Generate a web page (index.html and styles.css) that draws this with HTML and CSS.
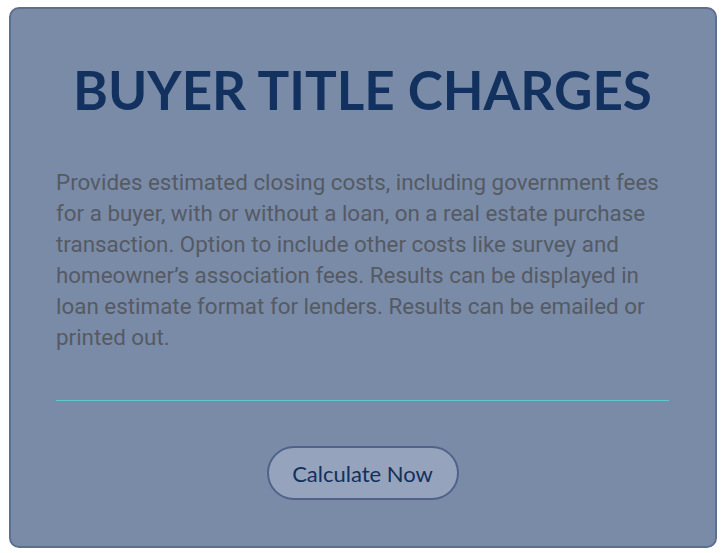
FILE: index.html
```html
<!DOCTYPE html>
<html>
<head>
<meta charset="utf-8">
<link rel="stylesheet" href="styles.css">
</head>
<body>
<div class="card">
  <h1 class="title">BUYER TITLE CHARGES</h1>
  <p class="desc">Provides estimated closing costs, including government fees for a buyer, with or without a loan, on a real estate purchase transaction. Option to include other costs like survey and homeowner’s association fees. Results can be displayed in loan estimate format for lenders. Results can be emailed or printed out.</p>
  <hr class="divider">
  <div class="actions">
    <a class="btn">Calculate Now</a>
  </div>
</div>
</body>
</html>
```
FILE: styles.css
```css
html, body { margin: 0; padding: 0; background: #ffffff; }
body { padding: 7px 10px 0 9px; }
.card {
  box-sizing: border-box;
  width: 708px;
  height: 541px;
  background: #7a8ba8;
  border: 2px solid #5d6f8f;
  border-radius: 10px;
  padding: 0 46px 0 45px;
  display: flex;
  flex-direction: column;
}
.title {
  margin: 49px 0 0;
  text-align: center;
  white-space: nowrap;
  font-family: "Lato", sans-serif;
  font-weight: 700;
  font-size: 53px;
  line-height: 64px;
  color: #13315f;
  letter-spacing: 0;
}
.desc {
  margin: 45px 0 0;
  font-family: "Roboto", sans-serif;
  font-size: 22.4px;
  line-height: 31px;
  color: #555a63;
}
.divider {
  margin: 47px 0 0;
  border: 0;
  height: 1px;
  background: #5ec7cf;
}
.actions {
  display: flex;
  justify-content: center;
  margin-top: 45px;
}
.btn {
  box-sizing: border-box;
  width: 192px;
  height: 54px;
  border: 2px solid #4f628a;
  border-radius: 27px;
  background: #96a3bc;
  color: #13305c;
  font-family: "Lato", sans-serif;
  font-size: 22px;
  display: flex;
  align-items: center;
  justify-content: center;
}
```
